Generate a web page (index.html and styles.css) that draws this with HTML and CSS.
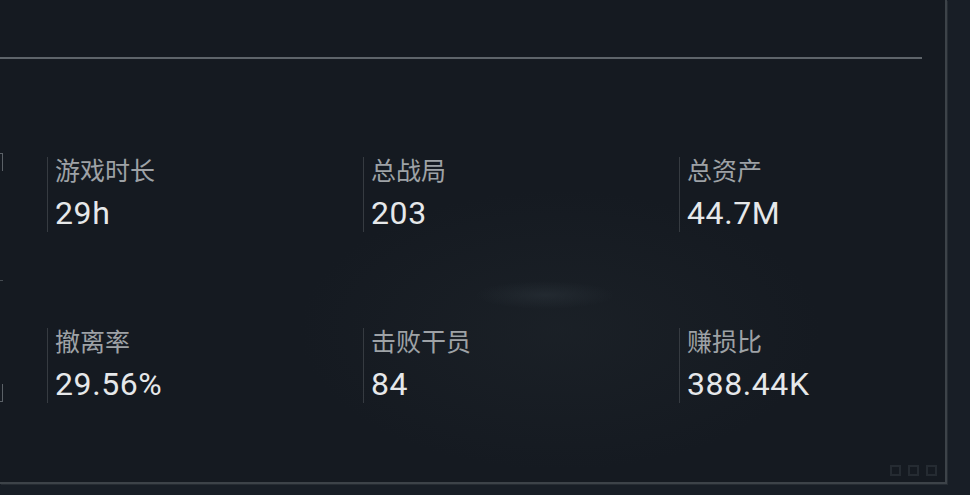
FILE: index.html
```html
<!DOCTYPE html>
<html lang="zh-CN">
<head>
<meta charset="utf-8">
<title>统计</title>
<link rel="stylesheet" href="styles.css">
</head>
<body>
<div class="panel">
  <div class="header"></div>
  <div class="divider"></div>
  <div class="body">
    <div class="edge"><span class="tick"></span></div>
    <div class="stats">
      <div class="stat"><div class="label">游戏时长</div><div class="value">29h</div></div>
      <div class="stat"><div class="label">总战局</div><div class="value">203</div></div>
      <div class="stat"><div class="label">总资产</div><div class="value">44.7M</div></div>
      <div class="stat"><div class="label">撤离率</div><div class="value">29.56%</div></div>
      <div class="stat"><div class="label">击败干员</div><div class="value">84</div></div>
      <div class="stat"><div class="label">赚损比</div><div class="value">388.44K</div></div>
    </div>
  </div>
  <div class="dots"><span></span><span></span><span></span></div>
</div>
</body>
</html>
```
FILE: styles.css
```css
html, body {
  margin: 0;
  padding: 0;
}
body {
  width: 970px;
  height: 495px;
  overflow: hidden;
  background: #181e26;
  font-family: Roboto, "Noto Sans CJK SC", sans-serif;
}
.panel {
  position: relative;
  width: 945px;
  height: 482px;
  overflow: hidden;
  background:
    radial-gradient(ellipse 70px 14px at 545px 295px, rgba(120,140,150,0.10), rgba(0,0,0,0)),
    radial-gradient(ellipse 260px 140px at 560px 330px, rgba(30,36,42,0.6), rgba(0,0,0,0)),
    #151a21;
  border-right: 2px solid #3d4349;
  border-bottom: 2px solid #3d4349;
  box-shadow: 1px 1px 0 #262c33;
}
.header {
  height: 57px;
}
.divider {
  width: 922px;
  height: 2px;
  background: #5e646a;
}
.body {
  display: flex;
  padding-top: 94px;
}
.edge {
  position: relative;
  flex: none;
  width: 3px;
  height: 249px;
  margin-right: 44px;
}
.edge::before,
.edge::after {
  content: "";
  position: absolute;
  right: 0;
  width: 3px;
  height: 18px;
  border-right: 1px solid #5b6167;
  box-sizing: border-box;
}
.edge::before {
  top: 0;
  border-top: 1px solid #5b6167;
}
.edge::after {
  bottom: 0;
  border-bottom: 1px solid #5b6167;
}
.tick {
  position: absolute;
  top: 127px;
  left: 0;
  width: 3px;
  height: 1px;
  background: #454b51;
}
.stats {
  flex: none;
  display: grid;
  grid-template-columns: 316px 316px 316px;
  row-gap: 96px;
  margin-top: 4px;
}
.stat {
  border-left: 1px solid #363b41;
  padding-left: 7px;
  height: 75px;
}
.label {
  font-family: "Noto Sans CJK SC", sans-serif;
  font-size: 25px;
  line-height: 24px;
  color: #9ea2a6;
}
.value {
  font-family: Roboto, sans-serif;
  font-size: 32px;
  line-height: 36px;
  letter-spacing: 0.6px;
  margin-top: 14px;
  color: #e6e8ea;
}
.dots {
  position: absolute;
  right: 8px;
  bottom: 6px;
  display: flex;
  gap: 7px;
}
.dots span {
  width: 11px;
  height: 11px;
  box-sizing: border-box;
  border: 2px solid #252b32;
}
```
